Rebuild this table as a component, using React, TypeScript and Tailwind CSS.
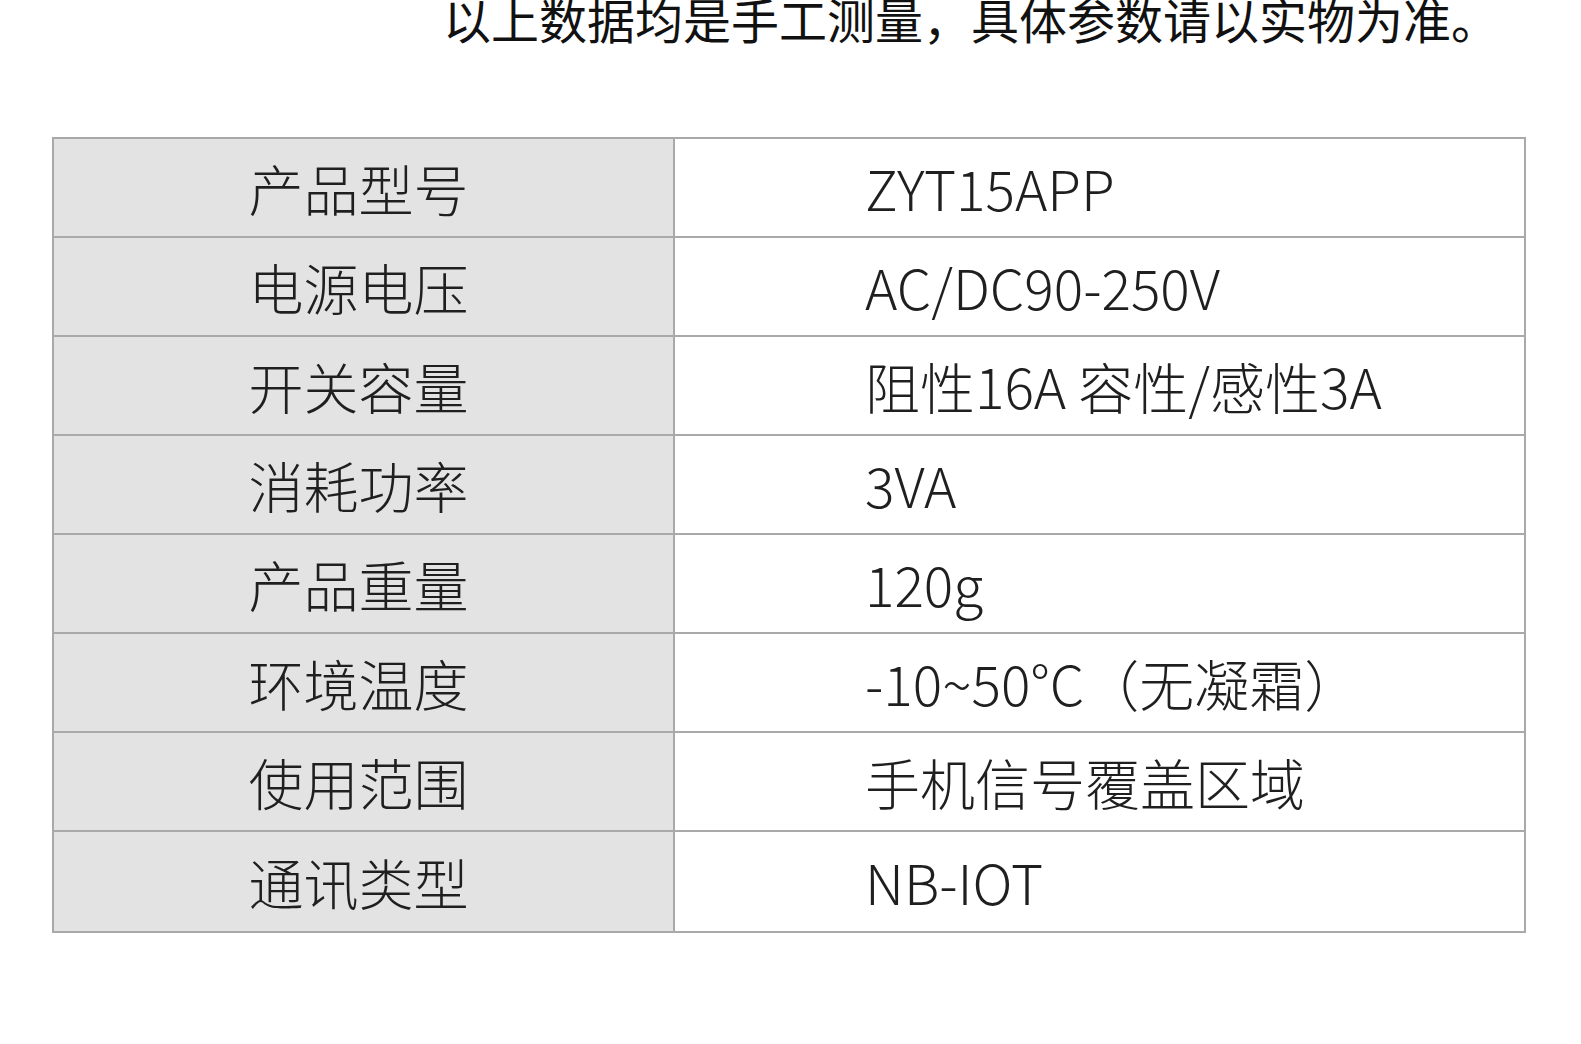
const specs: [string, string][] = [
  ["产品型号", "ZYT15APP"],
  ["电源电压", "AC/DC90-250V"],
  ["开关容量", "阻性16A 容性/感性3A"],
  ["消耗功率", "3VA"],
  ["产品重量", "120g"],
  ["环境温度", "-10~50°C（无凝霜）"],
  ["使用范围", "手机信号覆盖区域"],
  ["通讯类型", "NB-IOT"],
];

export default function App() {
  return (
    <div
      className="w-[1581px] h-[1044px] overflow-hidden bg-white text-[#1f1f1f]"
      style={{ fontFamily: '"Noto Sans CJK SC", "Noto Sans", sans-serif' }}
    >
      <div className="pl-[443px] -mt-[6px] text-[48px] leading-none font-normal text-[#111] whitespace-nowrap">
        以上数据均是手工测量，具体参数请以实物为准。
      </div>

      <div className="ml-[52px] mt-[95px] w-[1474px] border-2 border-[#a9a9a9]">
        {specs.map(([label, value], i) => (
          <div
            key={label}
            className={
              i < specs.length - 1
                ? "flex h-[99px] border-b-2 border-[#a9a9a9]"
                : "flex h-[99px]"
            }
          >
            <div className="w-[621px] shrink-0 flex items-center justify-center bg-[#e3e3e3] border-r-2 border-[#a9a9a9] text-[55px] font-light leading-none pr-[10px]">
              {label}
            </div>
            <div className="flex-1 flex items-center pl-[190px] text-[55px] font-light leading-none">
              {value}
            </div>
          </div>
        ))}
      </div>
    </div>
  );
}
